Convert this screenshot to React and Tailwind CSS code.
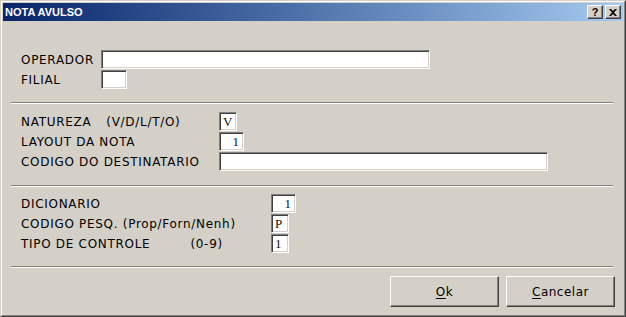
const sunken =
  'bg-white border border-t-[#808080] border-l-[#808080] border-b-white border-r-white shadow-[inset_1px_1px_0_#404040,inset_-1px_-1px_0_#d4d0c8]'
const raised =
  'bg-[#d4d0c8] border border-t-white border-l-white border-b-[#404040] border-r-[#404040] shadow-[inset_-1px_-1px_0_#808080,inset_1px_1px_0_#d4d0c8]'

const label =
  "font-['DejaVu_Sans',sans-serif] text-[12px] tracking-[0.7px] text-black leading-none whitespace-pre"
const mono = "font-['Liberation_Serif',serif] text-[13px] text-[#111] leading-none"

const Separator = () => (
  <div className="ml-[8px] mr-[10px] border-t border-b border-t-[#808080] border-b-white" />
)

const Field = ({ text, extra, labelW, boxW, value, right }) => (
  <div className="flex items-center h-[19px]">
    <div className={`${labelW} ${label} flex items-center`}>
      <span>{text}</span>
      {extra}
    </div>
    <div
      className={`${boxW} h-[19px] ${sunken} flex items-center ${
        right ? 'justify-end pr-[4px]' : 'pl-[3px]'
      }`}
    >
      {value && <span className={mono}>{value}</span>}
    </div>
  </div>
)

export default function App() {
  return (
    <div className="w-[626px] h-[317px] bg-[#d4d0c8] border border-t-[#d4d0c8] border-l-[#d4d0c8] border-b-[#404040] border-r-[#404040]">
      <div className="w-full h-full border border-t-white border-l-white border-b-[#808080] border-r-[#808080] p-[1px] flex flex-col">
        {/* Title bar */}
        <div className="h-[18px] flex items-center justify-between bg-linear-to-r from-[#0a246a] to-[#a6caf0] pl-[2px] pr-[2px]">
          <span className="font-['Liberation_Sans',sans-serif] font-bold text-[11px] text-white leading-none">
            NOTA AVULSO
          </span>
          <div className="flex gap-[2px]">
            <div className={`w-[16px] h-[14px] ${raised} flex items-center justify-center`}>
              <span className="font-['Liberation_Sans',sans-serif] font-bold text-[11px] leading-none text-black">
                ?
              </span>
            </div>
            <div className={`w-[16px] h-[14px] ${raised} flex items-center justify-center`}>
              <svg width="8" height="7" viewBox="0 0 8 7">
                <path d="M0 0h2l2 2 2-2h2L5 3.5 8 7H6L4 5 2 7H0l3-3.5z" fill="#000" />
              </svg>
            </div>
          </div>
        </div>

        {/* Section 1 */}
        <div className="mt-[29px] pl-[18px] flex flex-col gap-[1px]">
          <Field text="OPERADOR" labelW="w-[80px]" boxW="w-[329px]" />
          <Field text="FILIAL" labelW="w-[80px]" boxW="w-[26px]" />
        </div>
        <div className="mt-[13px]">
          <Separator />
        </div>

        {/* Section 2 */}
        <div className="mt-[8px] pl-[18px] flex flex-col gap-[1px]">
          <Field
            text="NATUREZA"
            extra={<span className="ml-[15px]">(V/D/L/T/O)</span>}
            labelW="w-[198px]"
            boxW="w-[18px]"
            value="V"
          />
          <Field text="LAYOUT DA NOTA" labelW="w-[198px]" boxW="w-[25px]" value="1" right />
          <Field text="CODIGO DO DESTINATARIO" labelW="w-[198px]" boxW="w-[329px]" />
        </div>
        <div className="mt-[14px]">
          <Separator />
        </div>

        {/* Section 3 */}
        <div className="mt-[7px] pl-[18px] flex flex-col gap-[1px]">
          <Field text="DICIONARIO" labelW="w-[250px]" boxW="w-[25px]" value="1" right />
          <Field text="CODIGO PESQ. (Prop/Forn/Nenh)" labelW="w-[250px]" boxW="w-[18px]" value="P" />
          <Field
            text="TIPO DE CONTROLE"
            extra={<span className="ml-[40px]">(0-9)</span>}
            labelW="w-[250px]"
            boxW="w-[18px]"
            value="1"
          />
        </div>
        <div className="mt-[13px]">
          <Separator />
        </div>

        {/* Buttons */}
        <div className="mt-[8px] flex justify-end gap-[7px] pr-[8px]">
          <button className={`w-[109px] h-[31px] ${raised} flex items-center justify-center`}>
            <span className="font-['DejaVu_Sans',sans-serif] text-[12px] tracking-[0.5px] text-black leading-none">
              <span className="underline underline-offset-2">O</span>k
            </span>
          </button>
          <button className={`w-[109px] h-[31px] ${raised} flex items-center justify-center`}>
            <span className="font-['DejaVu_Sans',sans-serif] text-[12px] tracking-[0.5px] text-black leading-none">
              <span className="underline underline-offset-2">C</span>ancelar
            </span>
          </button>
        </div>
      </div>
    </div>
  )
}
